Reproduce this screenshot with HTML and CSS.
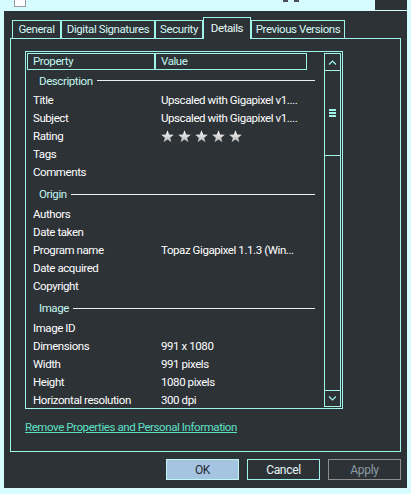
FILE: index.html
```html
<!DOCTYPE html>
<html lang="en">
<head>
  <meta charset="UTF-8">
  <title>Properties - Details</title>
  <link rel="stylesheet" href="styles.css">
</head>
<body>
  <div class="topbar">
    <span class="checkbox"></span>
    <span class="dash dash-a"></span>
    <span class="dash dash-b"></span>
    <span class="corner"></span>
  </div>

  <div class="dialog">
    <div class="tabs">
      <div class="tab tab-general">General</div>
      <div class="tab tab-signatures">Digital Signatures</div>
      <div class="tab tab-security">Security</div>
      <div class="tab tab-details active">Details</div>
      <div class="tab tab-versions">Previous Versions</div>
    </div>

    <div class="panel">
      <div class="list">
        <div class="list-body">
          <div class="list-head">
            <div class="col col-prop">Property</div>
            <div class="col col-value">Value</div>
          </div>
          <div class="list-rows">
            <div class="group">
              <div class="group-head">Description</div>
              <div class="row"><span class="label">Title</span><span class="value">Upscaled with Gigapixel v1....</span></div>
              <div class="row"><span class="label">Subject</span><span class="value">Upscaled with Gigapixel v1....</span></div>
              <div class="row">
                <span class="label">Rating</span>
                <span class="value stars">
                  <svg class="star" viewBox="0 0 13 13" width="13" height="13">
                    <defs>
                      <linearGradient id="starFill" x1="0" y1="0" x2="0" y2="1">
                        <stop offset="0" stop-color="#ffffff"/>
                        <stop offset="1" stop-color="#b4b4b4"/>
                      </linearGradient>
                    </defs>
                    <polygon points="6.5,0.2 8.15,4.53 12.78,4.76 9.16,7.67 10.38,12.14 6.5,9.6 2.62,12.14 3.84,7.67 0.22,4.76 4.85,4.53"/>
                  </svg>
                  <svg class="star" viewBox="0 0 13 13" width="13" height="13"><polygon points="6.5,0.2 8.15,4.53 12.78,4.76 9.16,7.67 10.38,12.14 6.5,9.6 2.62,12.14 3.84,7.67 0.22,4.76 4.85,4.53"/></svg>
                  <svg class="star" viewBox="0 0 13 13" width="13" height="13"><polygon points="6.5,0.2 8.15,4.53 12.78,4.76 9.16,7.67 10.38,12.14 6.5,9.6 2.62,12.14 3.84,7.67 0.22,4.76 4.85,4.53"/></svg>
                  <svg class="star" viewBox="0 0 13 13" width="13" height="13"><polygon points="6.5,0.2 8.15,4.53 12.78,4.76 9.16,7.67 10.38,12.14 6.5,9.6 2.62,12.14 3.84,7.67 0.22,4.76 4.85,4.53"/></svg>
                  <svg class="star" viewBox="0 0 13 13" width="13" height="13"><polygon points="6.5,0.2 8.15,4.53 12.78,4.76 9.16,7.67 10.38,12.14 6.5,9.6 2.62,12.14 3.84,7.67 0.22,4.76 4.85,4.53"/></svg>
                </span>
              </div>
              <div class="row"><span class="label">Tags</span></div>
              <div class="row"><span class="label">Comments</span></div>
            </div>

            <div class="group">
              <div class="group-head">Origin</div>
              <div class="row"><span class="label">Authors</span></div>
              <div class="row"><span class="label">Date taken</span></div>
              <div class="row"><span class="label">Program name</span><span class="value">Topaz Gigapixel 1.1.3 (Win...</span></div>
              <div class="row"><span class="label">Date acquired</span></div>
              <div class="row"><span class="label">Copyright</span></div>
            </div>

            <div class="group">
              <div class="group-head">Image</div>
              <div class="row"><span class="label">Image ID</span></div>
              <div class="row"><span class="label">Dimensions</span><span class="value">991 x 1080</span></div>
              <div class="row"><span class="label">Width</span><span class="value">991 pixels</span></div>
              <div class="row"><span class="label">Height</span><span class="value">1080 pixels</span></div>
              <div class="row"><span class="label">Horizontal resolution</span><span class="value">300 dpi</span></div>
            </div>
          </div>
        </div>

        <div class="scrollbar">
          <div class="sb-up">
            <svg width="9" height="5" viewBox="0 0 9 5"><polyline points="1,4.5 4.5,1 8,4.5" /></svg>
          </div>
          <div class="sb-thumb">
            <svg width="7" height="8" viewBox="0 0 7 8"><rect x="0" y="0" width="7" height="2"/><rect x="0" y="3" width="7" height="2"/><rect x="0" y="6" width="7" height="2"/></svg>
          </div>
          <div class="sb-track"></div>
          <div class="sb-down">
            <svg width="9" height="5" viewBox="0 0 9 5"><polyline points="1,0.5 4.5,4 8,0.5" /></svg>
          </div>
        </div>
      </div>

      <a class="remove-link" href="#">Remove Properties and Personal Information</a>
    </div>

    <div class="buttons">
      <button class="btn btn-ok">OK</button>
      <button class="btn btn-cancel">Cancel</button>
      <button class="btn btn-apply">Apply</button>
    </div>
  </div>
</body>
</html>
```

FILE: styles.css
```css
* {
  box-sizing: border-box;
}

body {
  margin: 0;
  width: 411px;
  height: 494px;
  overflow: hidden;
  background-color: #d6fcff;
  font-family: Roboto, "Noto Sans", sans-serif;
  font-size: 11.5px;
  letter-spacing: -0.42px;
  color: #ffffff;
}

/* strip of the window behind the dialog */
.topbar {
  display: flex;
  align-items: flex-start;
  height: 11px;
}

.checkbox {
  width: 12px;
  height: 7px;
  margin-left: 14px;
  background-color: #ffffff;
  border: 1px solid #9a9a9a;
  border-top: none;
}

.dash {
  width: 5px;
  height: 2px;
  background-color: #4a4f55;
}

.dash-a {
  margin-left: 257px;
}

.dash-b {
  margin-left: 6px;
}

.corner {
  margin-left: auto;
  margin-right: 4px;
  width: 32px;
  height: 10px;
  background-color: #2d3237;
}

/* dialog */
.dialog {
  margin: 0 4px;
  height: 477px;
  padding: 6px 6px 0;
  background-color: #2d3237;
}

.tabs {
  display: flex;
  height: 21px;
  margin-left: 2px;
  position: relative;
  z-index: 1;
}

.tab {
  height: 18px;
  margin-top: 3px;
  border: 1px solid #a0f5ea;
  border-bottom: none;
  color: #d4f7f3;
  text-align: center;
  line-height: 17px;
  white-space: nowrap;
}

.tab.active {
  height: 22px;
  margin-top: 0;
  background-color: #2d3237;
  color: #e6fbf8;
  line-height: 20px;
}

.tab-general { width: 49px; }
.tab-signatures { width: 94px; }
.tab-security { width: 48px; }
.tab-details { width: 48px; }
.tab-versions { width: 94px; }

.panel {
  height: 414px;
  padding: 12px 0 0 14px;
  border: 1px solid #a0f5ea;
}

/* details list */
.list {
  display: flex;
  width: 318px;
  height: 358px;
  padding: 1px;
  border: 1px solid #a0f5ea;
}

.list-body {
  flex: 1;
  overflow: hidden;
}

.list-head {
  display: flex;
  height: 17px;
}

.col {
  padding-left: 5px;
  border: 1px solid #a0f5ea;
  color: #c4f6ef;
  line-height: 15px;
}

.col-prop {
  width: 128px;
}

.col-value {
  width: 152px;
}

.group-head {
  display: flex;
  align-items: center;
  height: 24px;
  padding: 2px 9px 0 12px;
  color: #c4f6ef;
}

.group-head::after {
  content: "";
  flex: 1;
  height: 1px;
  margin-left: 4px;
  background-color: #eeeeee;
}

.group:first-child .group-head {
  height: 21px;
  padding-top: 0;
}

.row {
  display: flex;
  align-items: center;
  height: 18px;
  padding-left: 6px;
  white-space: nowrap;
}

.label {
  flex: none;
  width: 128px;
}

.stars {
  display: flex;
  gap: 4px;
}

.star {
  display: block;
  fill: url(#starFill);
}

/* scrollbar */
.scrollbar {
  display: flex;
  flex-direction: column;
  width: 17px;
  border: 1px solid #a0f5ea;
}

.scrollbar svg {
  display: block;
  fill: none;
  stroke: #a0f5ea;
  stroke-width: 1.2;
}

.sb-up,
.sb-thumb,
.sb-down {
  display: flex;
  align-items: center;
  justify-content: center;
}

.sb-up {
  height: 17px;
  border-bottom: 1px solid #a0f5ea;
}

.sb-thumb {
  height: 85px;
  border-bottom: 1px solid #a0f5ea;
}

.sb-thumb svg {
  fill: #a0f5ea;
  stroke: none;
}

.sb-track {
  flex: 1;
}

.sb-down {
  height: 16px;
  border-top: 1px solid #a0f5ea;
}

.remove-link {
  display: block;
  width: max-content;
  margin-top: 10px;
  line-height: 16px;
  color: #5ce0c4;
  text-decoration: underline;
}

/* buttons */
.buttons {
  display: flex;
  justify-content: flex-end;
  gap: 8px;
  margin-top: 7px;
}

.btn {
  width: 73px;
  height: 21px;
  padding: 0;
  border: 1px solid #a0f5ea;
  background-color: transparent;
  font-family: Roboto, "Noto Sans", sans-serif;
  font-size: 12px;
  letter-spacing: -0.3px;
}

.btn-ok {
  background-color: #a5c4e2;
  border-color: #c2f6f4;
  color: #1e2a30;
}

.btn-cancel {
  color: #e6f6f6;
}

.btn-apply {
  border-color: #8f8f8f;
  color: #8d9ba3;
}
```
